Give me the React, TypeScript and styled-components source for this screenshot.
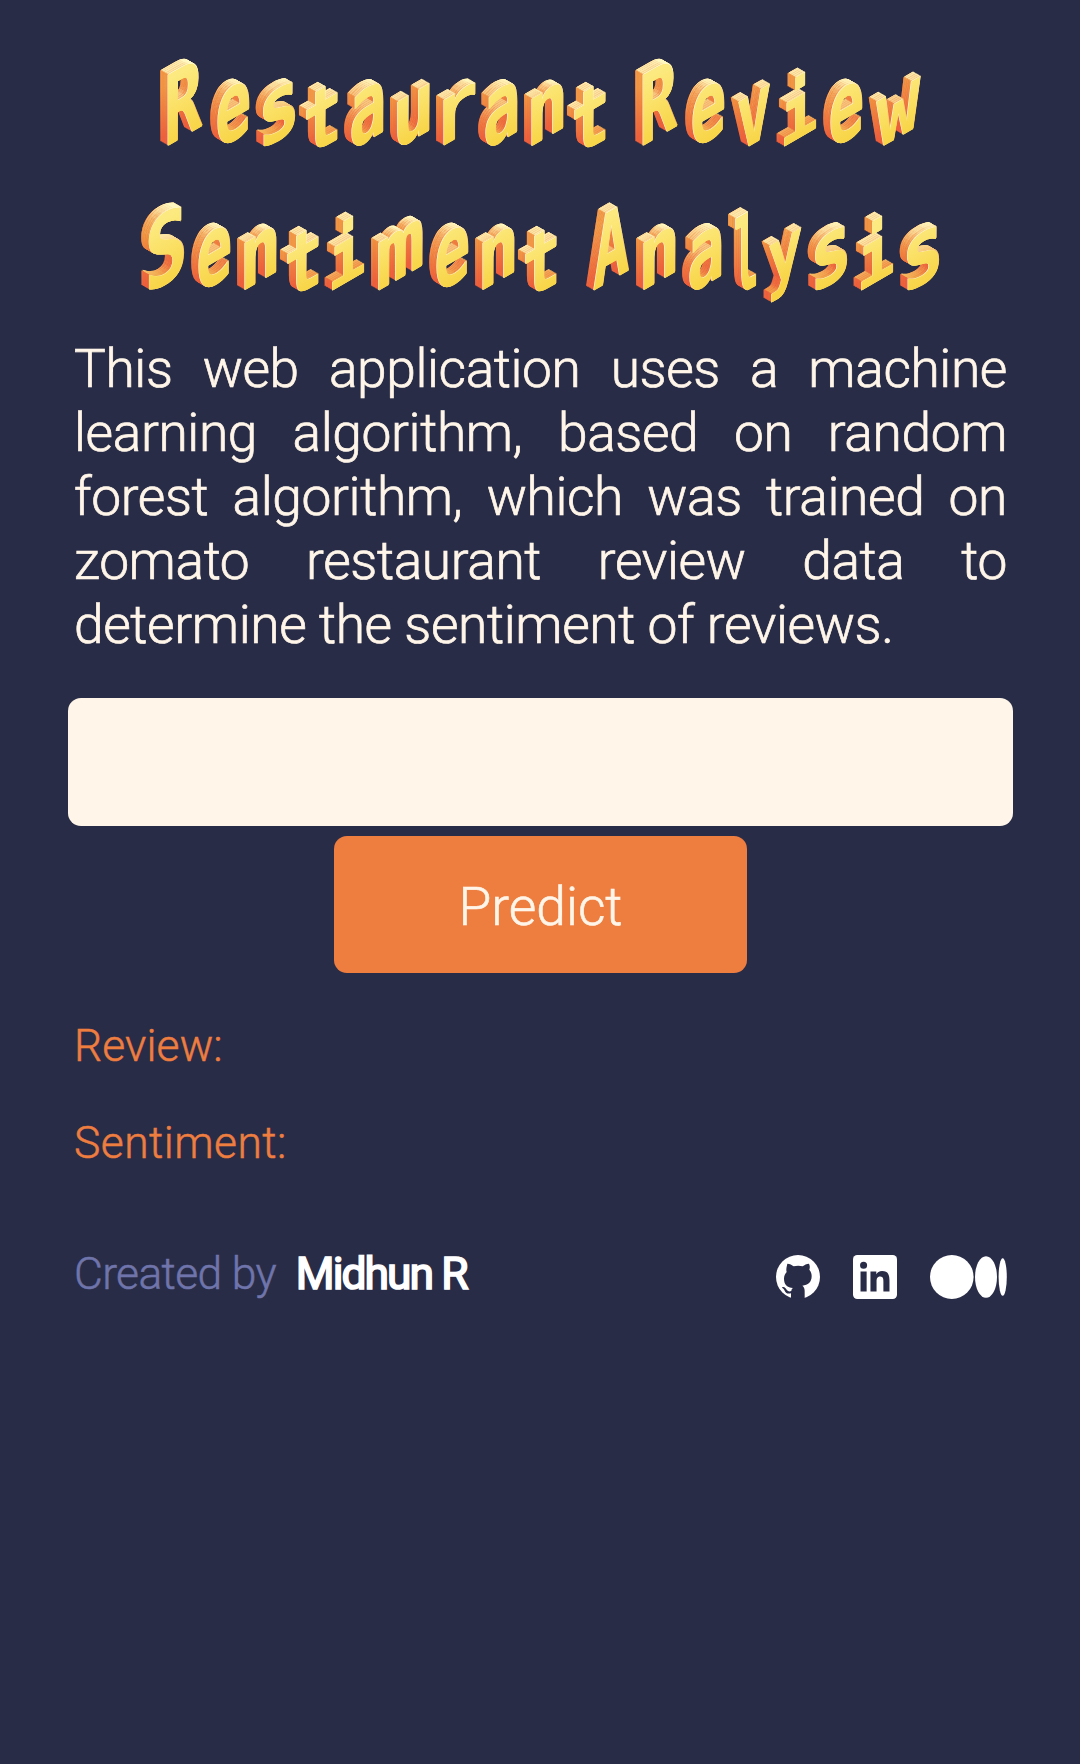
import React from "react";
import styled, { createGlobalStyle, css } from "styled-components";

const GlobalStyle = createGlobalStyle`
  * { box-sizing: border-box; }
  body {
    margin: 0;
    background: #292c47;
    color: #fff6e9;
    font-family: Roboto, "Liberation Sans", sans-serif;
    font-weight: 300;
  }
`;

/* Staircase of shadows: each step leaves a sliver of side colour on the left
   and a sliver of lid colour on top, which reads as an isometric extrusion. */
const extrude = (side: string, lid: string, sx: number, sy: number) => {
  const steps = 14;
  const dx = 8 / steps / sx;
  const dy = 9.2 / steps / sy;
  const out: string[] = [`${(-0.7 / sx).toFixed(2)}px -0.6px #fffbe0`];
  for (let i = 1; i <= steps; i++) {
    out.push(`${(-(i - 1) * dx + 0.7).toFixed(2)}px ${(-i * dy).toFixed(2)}px ${lid}`);
    out.push(`${(-i * dx).toFixed(2)}px ${(-i * dy).toFixed(2)}px ${side}`);
  }
  return out.join(", ");
};

const Page = styled.main`
  min-height: 1764px;
  padding: 41px 67px 0 68px;
`;

const Title = styled.h1`
  margin: 0;
  height: 288px;
  font-family: "DejaVu Sans Mono", monospace;
  font-weight: 700;
  font-size: 88px;
  line-height: 144px;
`;

const TitleLine = styled.span<{ $indent: number }>`
  display: flex;
  height: 144px;
  padding-left: ${(p) => p.$indent}px;
`;

const Slot = styled.span<{ $w: number }>`
  display: block;
  flex: none;
  width: ${(p) => p.$w}px;
  white-space: pre;
`;

const layer = css`
  content: attr(data-glyph);
  position: absolute;
  inset: 0 -20px;
  padding: 0 20px;
  z-index: -1;
`;

type Shape = { w: number; sx: number; sy: number; bear: number; dy: number };

const Glyph = styled.span<{ $s: Shape }>`
  position: relative;
  display: block;
  width: max-content;
  isolation: isolate;
  color: #f9dc5c;
  transform-origin: 0 104px;
  transform: translateY(${(p) => p.$s.dy}px) skewY(-30deg)
    scale(${(p) => p.$s.sx}, ${(p) => p.$s.sy}) translateX(${(p) => -p.$s.bear}px);

  &::before {
    ${layer}
    text-shadow: ${(p) => extrude("#ec5f3d", "#f2a94c", p.$s.sx, p.$s.sy)};
  }
  &::after {
    ${layer}
    text-shadow: ${(p) => extrude("#ef9240", "#fffac2", p.$s.sx, p.$s.sy)};
    mask-image: linear-gradient(#000 46px, transparent 92px);
  }
`;

const Face = styled.span`
  display: block;
  color: transparent;
  background: linear-gradient(#fcea80 42px, #f8d445 104px);
  background-clip: text;
  -webkit-background-clip: text;
`;

const shapes: Record<string, Shape> = {
  R: { w: 50, sx: 0.717, sy: 1.1, bear: 5.3, dy: 3 },
  S: { w: 50, sx: 0.81, sy: 1.1, bear: 5.1, dy: 6.6 },
  A: { w: 50, sx: 0.69, sy: 1.09, bear: 1.6, dy: 3.6 },
  e: { w: 46, sx: 0.674, sy: 1.11, bear: 3.6, dy: 6.6 },
  s: { w: 46, sx: 0.805, sy: 1.05, bear: 7.8, dy: 5.4 },
  t: { w: 42, sx: 0.727, sy: 0.965, bear: 9.1, dy: 12 },
  a: { w: 46, sx: 0.705, sy: 1.09, bear: 4, dy: 7 },
  u: { w: 46, sx: 0.8, sy: 0.97, bear: 6.9, dy: 5.6 },
  r: { w: 42, sx: 0.83, sy: 0.94, bear: 12.4, dy: 2.4 },
  n: { w: 46, sx: 0.796, sy: 0.98, bear: 7.3, dy: 3.2 },
  v: { w: 46, sx: 0.665, sy: 1.045, bear: 3.6, dy: 9.4 },
  i: { w: 46, sx: 0.707, sy: 0.87, bear: 6.6, dy: 3.1 },
  w: { w: 58, sx: 0.82, sy: 1, bear: 0.4, dy: 6.8 },
  m: { w: 58, sx: 0.93, sy: 0.99, bear: 3.5, dy: 3.5 },
  l: { w: 34, sx: 0.46, sy: 1.17, bear: 3.8, dy: 10.5 },
  y: { w: 46, sx: 0.65, sy: 0.87, bear: 2.9, dy: 0.5 },
  " ": { w: 23, sx: 1, sy: 1, bear: 0, dy: 0 },
};

const IsoLine = ({ text, indent }: { text: string; indent: number }) => (
  <TitleLine $indent={indent}>
    {[...text].map((ch, i) => {
      const s = shapes[ch];
      return (
        <Slot key={i} $w={s.w}>
          {ch === " " ? (
            " "
          ) : (
            <Glyph data-glyph={ch} $s={s}>
              <Face>{ch}</Face>
            </Glyph>
          )}
        </Slot>
      );
    })}
  </TitleLine>
);

const Intro = styled.p`
  margin: 8px 6px 0;
  font-size: 53.3px;
  line-height: 64px;
  letter-spacing: -0.4px;
  text-align: justify;
  -webkit-text-stroke: 0.7px #fff6e9;
`;

const Form = styled.form`
  display: flex;
  flex-direction: column;
  align-items: center;
  gap: 10px;
  margin-top: 41px;
`;

const ReviewInput = styled.input`
  width: 100%;
  height: 128px;
  border: 0;
  border-radius: 13px;
  padding: 0 27px;
  background: #fff6e9;
  color: #292c47;
  font: inherit;
  font-size: 53.3px;
  outline: 0;
`;

const PredictButton = styled.button`
  width: 413px;
  height: 137px;
  border: 0;
  border-radius: 13px;
  padding: 4px 0 0;
  background: #ee7d40;
  color: #fff6e9;
  font: inherit;
  font-size: 53.3px;
  -webkit-text-stroke: 0.6px #fff6e9;
`;

const Results = styled.section`
  display: flex;
  flex-direction: column;
  gap: 43px;
  margin: 46px 6px 0;
`;

const ResultLabel = styled.p<{ $track: number }>`
  margin: 0;
  color: #ee7d40;
  font-size: 44.4px;
  line-height: 54px;
  letter-spacing: ${(p) => p.$track}px;
  -webkit-text-stroke: 0.5px #ee7d40;
`;

const Footer = styled.footer`
  display: flex;
  justify-content: space-between;
  align-items: center;
  margin: 77px 6px 0 6px;
  height: 54px;
`;

const Credit = styled.div`
  display: flex;
  gap: 20px;
  font-size: 44.4px;
  line-height: 54px;
  letter-spacing: -0.65px;
  color: #6f75ab;
  -webkit-text-stroke: 0.5px #6f75ab;
`;

const Author = styled.strong`
  color: #fff;
  font-weight: 400;
  letter-spacing: -1.95px;
  -webkit-text-stroke: 1.7px #fff;
`;

const Links = styled.nav`
  display: flex;
  gap: 33px;
  margin-top: 5px;
  color: #fff;
  svg { display: block; }
`;

const GithubMark = () => (
  <svg width="44" height="44" viewBox="0 0 132 132">
    <circle cx="66" cy="66" r="66" fill="#fff" />
    <path
      fill="#292c47"
      d="M34 26c7 0 14 4 19 8 8-2 19-2 27 0 5-4 12-8 19-8 3 6 3 12 1 18 5 6 7 12 7 19 0 19-11 27-28 29 5 4 7 9 7 16v26H45v-19c-12 3-17-3-19-8-2-4-4-6-7-8-2-2 0-3 3-3 5 1 7 4 9 7 4 7 10 7 15 5 0-4 2-7 5-9-17-2-27-10-27-28 0-8 3-14 8-20-2-6-1-12 2-25z"
    />
    <rect x="40" y="131" width="52" height="2" fill="#292c47" />
  </svg>
);

const LinkedinMark = () => (
  <svg width="44" height="44" viewBox="0 0 24 24">
    <rect width="24" height="24" rx="2.3" fill="#fff" />
    <path
      fill="#292c47"
      transform="translate(.78 .5) scale(.935 .95)"
      d="M20.447 20.452h-3.554v-5.569c0-1.328-.027-3.037-1.852-3.037-1.853 0-2.136 1.445-2.136 2.939v5.667H9.351V9h3.414v1.561h.046c.477-.9 1.637-1.85 3.37-1.85 3.601 0 4.267 2.37 4.267 5.455v6.286zM5.337 7.433a2.062 2.062 0 1 1 0-4.128 2.062 2.062 0 0 1 0 4.128zm1.782 13.019H3.555V9h3.564v11.452z"
    />
  </svg>
);

const MediumMark = () => (
  <svg width="77" height="44" viewBox="0 0 77 44" fill="currentColor">
    <ellipse cx="21.8" cy="22" rx="21.8" ry="22" />
    <ellipse cx="56" cy="22" rx="11" ry="20.8" />
    <ellipse cx="72.7" cy="22" rx="4.1" ry="18.8" />
  </svg>
);

export default function App() {
  return (
    <Page>
      <GlobalStyle />
      <Title>
        <IsoLine text="Restaurant Review" indent={100} />
        <IsoLine text="Sentiment Analysis" indent={81} />
      </Title>
      <Intro>
        This web application uses a machine learning algorithm, based on random forest algorithm,
        which was trained on zomato restaurant review data to determine the sentiment of reviews.
      </Intro>
      <Form onSubmit={(e) => e.preventDefault()}>
        <ReviewInput type="text" />
        <PredictButton type="submit">Predict</PredictButton>
      </Form>
      <Results>
        <ResultLabel $track={0.1}>Review:</ResultLabel>
        <ResultLabel $track={0.45}>Sentiment:</ResultLabel>
      </Results>
      <Footer>
        <Credit>
          <span>Created by</span>
          <Author>Midhun R</Author>
        </Credit>
        <Links>
          <GithubMark />
          <LinkedinMark />
          <MediumMark />
        </Links>
      </Footer>
    </Page>
  );
}
